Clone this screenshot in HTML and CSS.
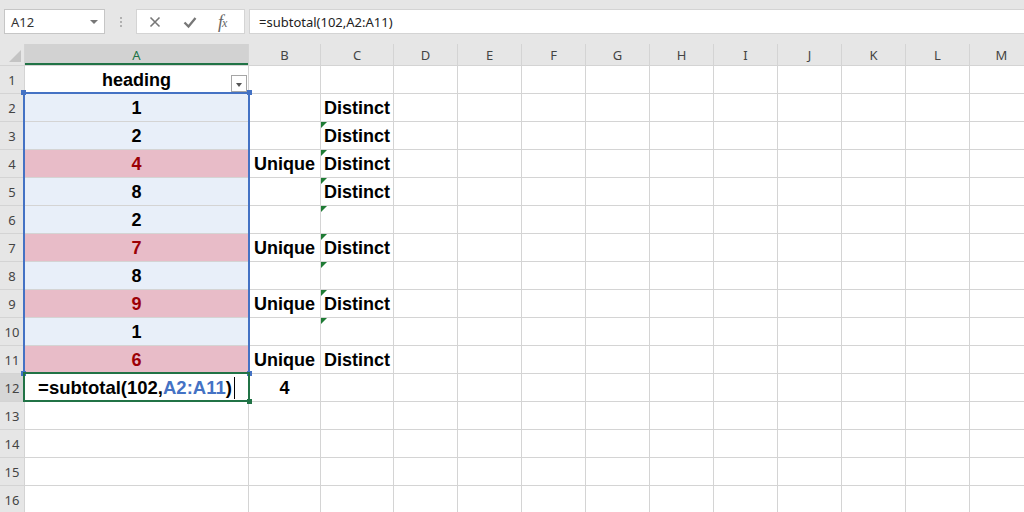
FILE: index.html
```html
<!DOCTYPE html>
<html lang="en">

<head>
    <meta charset="UTF-8">
    <title>Book1 - Excel</title>
    <link rel="stylesheet" href="styles.css">
</head>

<body>
    <!-- Name box + formula bar -->
    <div class="toolbar">
        <div class="namebox"><span>A12</span><span class="drop"></span></div>
        <div class="grip"><i></i><i></i><i></i></div>
        <div class="fbtns">
            <svg width="14" height="14" viewBox="0 0 14 14"><path d="M2.5 2.5 L11.5 11.5 M11.5 2.5 L2.5 11.5" stroke="#777" stroke-width="1.6" fill="none"/></svg>
            <svg width="14" height="14" viewBox="0 0 14 14"><path d="M1.5 7.5 L5.5 11.5 L12.5 3" stroke="#777" stroke-width="2.3" fill="none"/></svg>
            <span class="fx"><i>f</i><sub>x</sub></span>
        </div>
        <div class="fbar">=subtotal(102,A2:A11)</div>
    </div>

    <!-- Sheet -->
    <div class="sheet">
        <div class="grid">
            <div class="corner"></div><div class="ch on">A</div><div class="ch">B</div><div class="ch">C</div><div class="ch">D</div><div class="ch">E</div><div class="ch">F</div><div class="ch">G</div><div class="ch">H</div><div class="ch">I</div><div class="ch">J</div><div class="ch">K</div><div class="ch">L</div><div class="ch">M</div>

            <div class="rh">1</div><div class="c">heading<span class="filter"></span></div><div class="c"></div><div class="c"></div><div class="c"></div><div class="c"></div><div class="c"></div><div class="c"></div><div class="c"></div><div class="c"></div><div class="c"></div><div class="c"></div><div class="c"></div><div class="c"></div>
            <div class="rh">2</div><div class="c sel">1</div><div class="c"></div><div class="c">Distinct</div><div class="c"></div><div class="c"></div><div class="c"></div><div class="c"></div><div class="c"></div><div class="c"></div><div class="c"></div><div class="c"></div><div class="c"></div><div class="c"></div>
            <div class="rh">3</div><div class="c sel">2</div><div class="c"></div><div class="c flag">Distinct</div><div class="c"></div><div class="c"></div><div class="c"></div><div class="c"></div><div class="c"></div><div class="c"></div><div class="c"></div><div class="c"></div><div class="c"></div><div class="c"></div>
            <div class="rh">4</div><div class="c bad">4</div><div class="c">Unique</div><div class="c flag">Distinct</div><div class="c"></div><div class="c"></div><div class="c"></div><div class="c"></div><div class="c"></div><div class="c"></div><div class="c"></div><div class="c"></div><div class="c"></div><div class="c"></div>
            <div class="rh">5</div><div class="c sel">8</div><div class="c"></div><div class="c flag">Distinct</div><div class="c"></div><div class="c"></div><div class="c"></div><div class="c"></div><div class="c"></div><div class="c"></div><div class="c"></div><div class="c"></div><div class="c"></div><div class="c"></div>
            <div class="rh">6</div><div class="c sel">2</div><div class="c"></div><div class="c flag"></div><div class="c"></div><div class="c"></div><div class="c"></div><div class="c"></div><div class="c"></div><div class="c"></div><div class="c"></div><div class="c"></div><div class="c"></div><div class="c"></div>
            <div class="rh">7</div><div class="c bad">7</div><div class="c">Unique</div><div class="c flag">Distinct</div><div class="c"></div><div class="c"></div><div class="c"></div><div class="c"></div><div class="c"></div><div class="c"></div><div class="c"></div><div class="c"></div><div class="c"></div><div class="c"></div>
            <div class="rh">8</div><div class="c sel">8</div><div class="c"></div><div class="c flag"></div><div class="c"></div><div class="c"></div><div class="c"></div><div class="c"></div><div class="c"></div><div class="c"></div><div class="c"></div><div class="c"></div><div class="c"></div><div class="c"></div>
            <div class="rh">9</div><div class="c bad">9</div><div class="c">Unique</div><div class="c flag">Distinct</div><div class="c"></div><div class="c"></div><div class="c"></div><div class="c"></div><div class="c"></div><div class="c"></div><div class="c"></div><div class="c"></div><div class="c"></div><div class="c"></div>
            <div class="rh">10</div><div class="c sel">1</div><div class="c"></div><div class="c flag"></div><div class="c"></div><div class="c"></div><div class="c"></div><div class="c"></div><div class="c"></div><div class="c"></div><div class="c"></div><div class="c"></div><div class="c"></div><div class="c"></div>
            <div class="rh">11</div><div class="c bad">6</div><div class="c">Unique</div><div class="c">Distinct</div><div class="c"></div><div class="c"></div><div class="c"></div><div class="c"></div><div class="c"></div><div class="c"></div><div class="c"></div><div class="c"></div><div class="c"></div><div class="c"></div>
            <div class="rh on">12</div><div class="c formula">=subtotal(102,<span class="ref">A2:A11</span>)<span class="caret"></span></div><div class="c">4</div><div class="c"></div><div class="c"></div><div class="c"></div><div class="c"></div><div class="c"></div><div class="c"></div><div class="c"></div><div class="c"></div><div class="c"></div><div class="c"></div><div class="c"></div>
            <div class="rh">13</div><div class="c"></div><div class="c"></div><div class="c"></div><div class="c"></div><div class="c"></div><div class="c"></div><div class="c"></div><div class="c"></div><div class="c"></div><div class="c"></div><div class="c"></div><div class="c"></div><div class="c"></div>
            <div class="rh">14</div><div class="c"></div><div class="c"></div><div class="c"></div><div class="c"></div><div class="c"></div><div class="c"></div><div class="c"></div><div class="c"></div><div class="c"></div><div class="c"></div><div class="c"></div><div class="c"></div><div class="c"></div>
            <div class="rh">15</div><div class="c"></div><div class="c"></div><div class="c"></div><div class="c"></div><div class="c"></div><div class="c"></div><div class="c"></div><div class="c"></div><div class="c"></div><div class="c"></div><div class="c"></div><div class="c"></div><div class="c"></div>
            <div class="rh">16</div><div class="c"></div><div class="c"></div><div class="c"></div><div class="c"></div><div class="c"></div><div class="c"></div><div class="c"></div><div class="c"></div><div class="c"></div><div class="c"></div><div class="c"></div><div class="c"></div><div class="c"></div>
        </div>

        <!-- range highlight for A2:A11 and the cell being edited -->
        <div class="range"><i class="tl"></i><i class="tr"></i><i class="bl"></i><i class="br"></i></div>
        <div class="edit"><i class="br"></i></div>
    </div>
</body>

</html>
```

FILE: styles.css
```css
/* General */
body {
    margin: 0;
    width: 1024px;
    height: 512px;
    overflow: hidden;
    background: #e6e6e6;
    font-family: "Noto Sans", "Open Sans", sans-serif;
    color: #333;
}

/* Toolbar */
.toolbar {
    height: 44px;
    box-sizing: border-box;
    padding-top: 9px;
    display: flex;
    align-items: flex-start;
}

.namebox {
    margin-left: 4px;
    width: 101px;
    height: 25px;
    box-sizing: border-box;
    background: #fff;
    border: 1px solid #c6c6c6;
    display: flex;
    align-items: center;
    justify-content: space-between;
    padding: 0 6px 0 6px;
    font-size: 13px;
    color: #333;
}

.namebox .drop {
    width: 0;
    height: 0;
    border-left: 4px solid transparent;
    border-right: 4px solid transparent;
    border-top: 4px solid #777;
}

.grip {
    width: 31px;
    height: 25px;
    display: flex;
    flex-direction: column;
    align-items: center;
    justify-content: center;
    gap: 2px;
}

.grip i {
    width: 2px;
    height: 2px;
    background: #b0b0b0;
}

.fbtns {
    width: 109px;
    height: 25px;
    box-sizing: border-box;
    background: #fff;
    border: 1px solid #d4d4d4;
    display: flex;
    align-items: center;
    padding-left: 11px;
    gap: 21px;
}

.fx {
    font-family: "Liberation Serif", serif;
    font-style: italic;
    color: #666;
    font-size: 18px;
    line-height: 1;
    width: 16px;
    white-space: nowrap;
}

.fx sub {
    font-size: 12px;
    vertical-align: 1px;
    margin-left: -1px;
}

.fbar {
    margin-left: 4px;
    flex: 1;
    height: 25px;
    box-sizing: border-box;
    background: #fff;
    border: 1px solid #d4d4d4;
    border-right: none;
    padding-left: 9px;
    display: flex;
    align-items: center;
    font-size: 13px;
    color: #222;
}

/* Sheet */
.sheet {
    position: relative;
}

.grid {
    display: grid;
    grid-template-columns: 24px 223px 71px 72px repeat(10, 63px);
    grid-template-rows: 21px repeat(16, 27px);
    gap: 1px;
    background: #d4d4d4;
}

.corner {
    background: #e6e6e6;
    position: relative;
}

.corner::after {
    content: "";
    position: absolute;
    right: 3px;
    bottom: 3px;
    width: 12px;
    height: 12px;
    background: #c4c4c4;
    clip-path: polygon(100% 0, 100% 100%, 0 100%);
}

.ch,
.rh {
    background: #e6e6e6;
    color: #444;
    font-size: 13px;
    display: flex;
    align-items: center;
    justify-content: center;
}

.ch.on {
    background: #d2d2d2;
    color: #217346;
    box-shadow: inset 0 -2px #217346;
}

.rh.on {
    background: #d6d6d6;
}

.c {
    background: #fff;
    position: relative;
    display: flex;
    align-items: center;
    justify-content: center;
    padding-top: 1px;
    font-family: "Liberation Sans", Arial, sans-serif;
    font-weight: bold;
    font-size: 18px;
    color: #000;
    white-space: nowrap;
}

.c.formula {
    font-size: 18.5px;
}

.c.sel {
    background: #e8eff9;
}

.c.bad {
    background: #e8bcc8;
    color: #9c0006;
}

.c.flag::before {
    content: "";
    position: absolute;
    left: 0;
    top: 0;
    width: 6px;
    height: 6px;
    background: #1e7b34;
    clip-path: polygon(0 0, 100% 0, 0 100%);
}

.filter {
    position: absolute;
    right: 1px;
    bottom: 1px;
    width: 16px;
    height: 17px;
    box-sizing: border-box;
    border: 1px solid #a6a6a6;
    background: #fff;
}

.filter::after {
    content: "";
    position: absolute;
    left: 4px;
    top: 7px;
    border-left: 3.5px solid transparent;
    border-right: 3.5px solid transparent;
    border-top: 4px solid #555;
}

.ref {
    color: #4472c4;
}

.caret {
    display: inline-block;
    width: 1px;
    height: 22px;
    margin-left: 2px;
    background: #000;
}

/* Selection overlays */
.range,
.edit {
    position: absolute;
    left: 23px;
    width: 227px;
    box-sizing: border-box;
    pointer-events: none;
}

.range {
    top: 48px;
    height: 282px;
    border: 2px solid #4472c4;
}

.edit {
    top: 328px;
    height: 30px;
    border: 2px solid #217346;
}

.range i,
.edit i {
    position: absolute;
    width: 5px;
    height: 5px;
    background: #4472c4;
}

.edit i {
    background: #217346;
}

.tl { left: -4px; top: -4px; }
.tr { right: -4px; top: -4px; }
.bl { left: -4px; bottom: -4px; }
.br { right: -4px; bottom: -4px; }
```
